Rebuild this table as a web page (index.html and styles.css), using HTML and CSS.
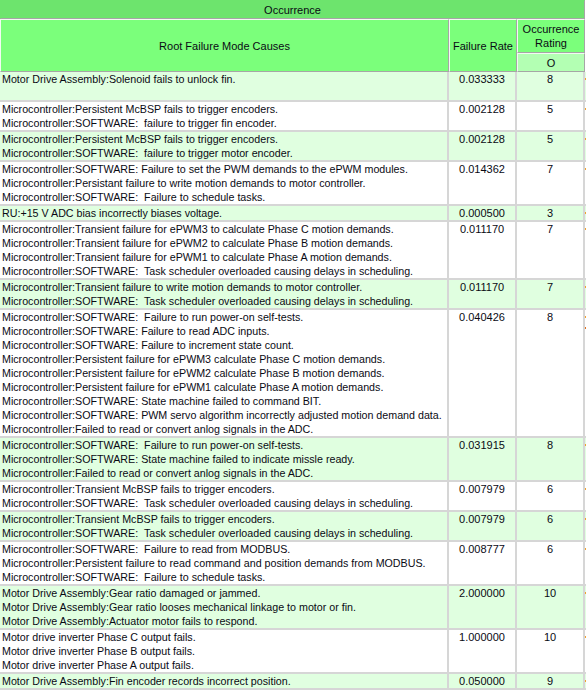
FILE: index.html
```html
<!DOCTYPE html>
<html>
<head>
<meta charset="utf-8">
<link rel="stylesheet" href="styles.css">
</head>
<body>
<table class="fmea">
  <colgroup>
    <col class="c-cause">
    <col class="c-rate">
    <col class="c-rating">
    <col class="c-next">
  </colgroup>
  <thead>
    <tr class="h-top">
      <th colspan="3" class="top">Occurrence</th>
      <th class="blank"></th>
    </tr>
    <tr class="h-mid">
      <th rowspan="2" class="main">Root Failure Mode Causes</th>
      <th rowspan="2" class="main nowrap">Failure Rate</th>
      <th class="main rating">Occurrence Rating</th>
      <th class="blank"></th>
    </tr>
    <tr class="h-sub">
      <th class="sub">O</th>
      <th class="blank"></th>
    </tr>
  </thead>
  <tbody>
    <tr class="g">
      <td class="tall">Motor Drive Assembly:Solenoid fails to unlock fin.</td>
      <td class="num">0.033333</td><td class="num">8</td><td class="nx"><span class="mk"></span></td>
    </tr>
    <tr>
      <td>Microcontroller:Persistent McBSP fails to trigger encoders.<br>Microcontroller:SOFTWARE:&nbsp; failure to trigger fin encoder.</td>
      <td class="num">0.002128</td><td class="num">5</td><td class="nx"><span class="mk"></span></td>
    </tr>
    <tr class="g">
      <td>Microcontroller:Persistent McBSP fails to trigger encoders.<br>Microcontroller:SOFTWARE:&nbsp; failure to trigger motor encoder.</td>
      <td class="num">0.002128</td><td class="num">5</td><td class="nx"><span class="mk"></span></td>
    </tr>
    <tr>
      <td>Microcontroller:SOFTWARE: Failure to set the PWM demands to the ePWM modules.<br>Microcontroller:Persistant failure to write motion demands to motor controller.<br>Microcontroller:SOFTWARE:&nbsp; Failure to schedule tasks.</td>
      <td class="num">0.014362</td><td class="num">7</td><td class="nx"><span class="mk"></span></td>
    </tr>
    <tr class="g">
      <td>RU:+15 V ADC bias incorrectly biases voltage.</td>
      <td class="num">0.000500</td><td class="num">3</td><td class="nx"><span class="mk"></span></td>
    </tr>
    <tr>
      <td>Microcontroller:Transient failure for ePWM3 to calculate Phase C motion demands.<br>Microcontroller:Transient failure for ePWM2 to calculate Phase B motion demands.<br>Microcontroller:Transient failure for ePWM1 to calculate Phase A motion demands.<br>Microcontroller:SOFTWARE:&nbsp; Task scheduler overloaded causing delays in scheduling.</td>
      <td class="num">0.011170</td><td class="num">7</td><td class="nx"><span class="mk"></span></td>
    </tr>
    <tr class="g">
      <td>Microcontroller:Transient failure to write motion demands to motor controller.<br>Microcontroller:SOFTWARE:&nbsp; Task scheduler overloaded causing delays in scheduling.</td>
      <td class="num">0.011170</td><td class="num">7</td><td class="nx"><span class="mk"></span></td>
    </tr>
    <tr>
      <td>Microcontroller:SOFTWARE:&nbsp; Failure to run power-on self-tests.<br>Microcontroller:SOFTWARE: Failure to read ADC inputs.<br>Microcontroller:SOFTWARE: Failure to increment state count.<br>Microcontroller:Persistent failure for ePWM3 calculate Phase C motion demands.<br>Microcontroller:Persistent failure for ePWM2 calculate Phase B motion demands.<br>Microcontroller:Persistent failure for ePWM1 calculate Phase A motion demands.<br>Microcontroller:SOFTWARE: State machine failed to command BIT.<br>Microcontroller:SOFTWARE: PWM servo algorithm incorrectly adjusted motion demand data.<br>Microcontroller:Failed to read or convert anlog signals in the ADC.</td>
      <td class="num">0.040426</td><td class="num">8</td><td class="nx"><span class="mk"></span><span class="mk low"></span></td>
    </tr>
    <tr class="g">
      <td>Microcontroller:SOFTWARE:&nbsp; Failure to run power-on self-tests.<br>Microcontroller:SOFTWARE: State machine failed to indicate missle ready.<br>Microcontroller:Failed to read or convert anlog signals in the ADC.</td>
      <td class="num">0.031915</td><td class="num">8</td><td class="nx"><span class="mk"></span></td>
    </tr>
    <tr>
      <td>Microcontroller:Transient McBSP fails to trigger encoders.<br>Microcontroller:SOFTWARE:&nbsp; Task scheduler overloaded causing delays in scheduling.</td>
      <td class="num">0.007979</td><td class="num">6</td><td class="nx"><span class="mk"></span></td>
    </tr>
    <tr class="g">
      <td>Microcontroller:Transient McBSP fails to trigger encoders.<br>Microcontroller:SOFTWARE:&nbsp; Task scheduler overloaded causing delays in scheduling.</td>
      <td class="num">0.007979</td><td class="num">6</td><td class="nx"><span class="mk"></span></td>
    </tr>
    <tr>
      <td>Microcontroller:SOFTWARE:&nbsp; Failure to read from MODBUS.<br>Microcontroller:Persistent failure to read command and position demands from MODBUS.<br>Microcontroller:SOFTWARE:&nbsp; Failure to schedule tasks.</td>
      <td class="num">0.008777</td><td class="num">6</td><td class="nx"><span class="mk"></span></td>
    </tr>
    <tr class="g">
      <td>Motor Drive Assembly:Gear ratio damaged or jammed.<br>Motor Drive Assembly:Gear ratio looses mechanical linkage to motor or fin.<br>Motor Drive Assembly:Actuator motor fails to respond.</td>
      <td class="num">2.000000</td><td class="num">10</td><td class="nx"><span class="mk"></span></td>
    </tr>
    <tr>
      <td>Motor drive inverter Phase C output fails.<br>Motor drive inverter Phase B output fails.<br>Motor drive inverter Phase A output fails.</td>
      <td class="num">1.000000</td><td class="num">10</td><td class="nx"><span class="mk"></span></td>
    </tr>
    <tr class="g">
      <td>Motor Drive Assembly:Fin encoder records incorrect position.</td>
      <td class="num">0.050000</td><td class="num">9</td><td class="nx"><span class="mk"></span></td>
    </tr>
  </tbody>
</table>
</body>
</html>
```

FILE: styles.css
```css
html, body {
  margin: 0;
  padding: 0;
  overflow: hidden;
  background: #ffffff;
}

.fmea {
  border-collapse: separate;
  border-spacing: 0;
  table-layout: fixed;
  width: 586px;
  font-family: "Liberation Sans", Arial, sans-serif;
  font-size: 10.7px;
  line-height: 14px;
  color: #0a0a14;
}

.c-cause { width: 449px; }
.c-rate { width: 68px; }
.c-rating { width: 68px; }
.c-next { width: 1px; }

.fmea th {
  font-weight: normal;
  font-size: 11px;
  text-align: center;
  vertical-align: middle;
  padding: 0;
  border-top: 1px solid #f2fbf2;
  border-left: 1px solid #f2fbf2;
  border-right: 1px solid #a6a6a6;
  border-bottom: 1px solid #a6a6a6;
}

.fmea th.top {
  background: #6de46d;
  height: 17px;
  border-top-color: #6de46d;
  border-left-color: #6de46d;
}

.fmea th.main {
  background: #7bff7b;
}

.fmea th.rating {
  height: 32px;
  line-height: 14px;
  padding: 0 2px;
}

.fmea th.sub {
  background: #b3ffb3;
  height: 17px;
}

.fmea th.blank {
  background: #ffffff;
  border: none;
}

.nowrap { white-space: nowrap; }

.fmea td {
  padding: 0 2px;
  vertical-align: top;
  white-space: nowrap;
  overflow: hidden;
  border-right: 2px solid #d6d6d6;
  border-bottom: 2px solid #d6d6d6;
  background: #ffffff;
}

.fmea tr.g td {
  background: #e0ffe0;
}

.fmea td.tall {
  height: 28px;
}

.fmea td.num {
  text-align: center;
  padding: 0;
  font-size: 11px;
}

.fmea td.nx {
  border-right: none;
  padding: 0;
  background: #ffffff;
}

.mk {
  display: block;
  width: 1px;
  height: 2px;
  margin-top: 6px;
  background: #f0a030;
}

.mk.low {
  margin-top: 9px;
  background: #e07020;
}
```
